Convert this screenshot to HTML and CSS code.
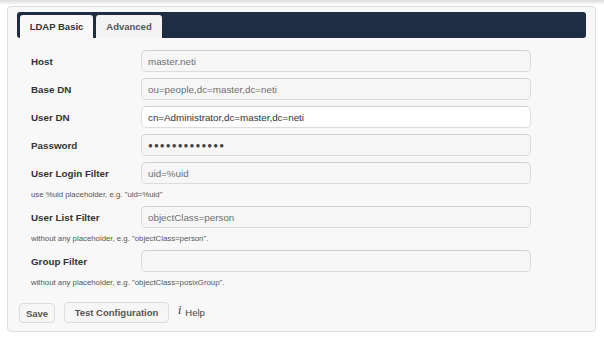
FILE: index.html
```html
<!DOCTYPE html>
<html lang="en">
<head>
  <meta charset="UTF-8">
  <title>LDAP</title>
  <link rel="stylesheet" href="styles.css">
</head>
<body>
  <div class="panel">
    <div class="tabbar">
      <div class="tab active">LDAP Basic</div>
      <div class="tab">Advanced</div>
    </div>

    <div class="form">
      <div class="row">
        <label>Host</label>
        <div class="input muted">master.neti</div>
      </div>
      <div class="row">
        <label>Base DN</label>
        <div class="input muted">ou=people,dc=master,dc=neti</div>
      </div>
      <div class="row">
        <label>User DN</label>
        <div class="input filled">cn=Administrator,dc=master,dc=neti</div>
      </div>
      <div class="row">
        <label>Password</label>
        <div class="input dots">&#9679;&#9679;&#9679;&#9679;&#9679;&#9679;&#9679;&#9679;&#9679;&#9679;&#9679;&#9679;&#9679;</div>
      </div>
      <div class="row">
        <label>User Login Filter</label>
        <div class="input muted">uid=%uid</div>
      </div>
      <div class="help">use %uid placeholder, e.g. "uid=%uid"</div>
      <div class="row">
        <label>User List Filter</label>
        <div class="input muted">objectClass=person</div>
      </div>
      <div class="help">without any placeholder, e.g. "objectClass=person".</div>
      <div class="row">
        <label>Group Filter</label>
        <div class="input muted"></div>
      </div>
      <div class="help">without any placeholder, e.g. "objectClass=posixGroup".</div>
    </div>

    <div class="actions">
      <button class="button save">Save</button>
      <button class="button test">Test Configuration</button>
      <span class="info">i</span>
      <span class="help-link">Help</span>
    </div>
  </div>
</body>
</html>
```

FILE: styles.css
```css
body {
  margin: 0;
  padding: 6px 0 0 7px;
  font-family: 'Liberation Sans', Arial, sans-serif;
  background: linear-gradient(#dcdcdc, #ffffff 5px);
  background-repeat: no-repeat;
  background-color: #fff;
  color: #333;
}

.panel {
  box-sizing: border-box;
  width: 589px;
  height: 326px;
  padding: 5px 9px 0 9px;
  display: flex;
  flex-direction: column;
  background-color: #f8f8f8;
  border: 1px solid #dedede;
  border-radius: 4px;
}

.tabbar {
  height: 26px;
  box-sizing: border-box;
  padding: 3px 3px 0 3px;
  display: flex;
  gap: 3px;
  background-color: #1e2c44;
  border-radius: 3px;
}

.tab {
  height: 23px;
  line-height: 24px;
  width: 66px;
  text-align: center;
  font-size: 9.5px;
  font-weight: bold;
  color: #555;
  background-color: #f3f3f3;
  border-radius: 3px 3px 0 0;
}

.tab.active {
  width: 73px;
  color: #333;
  background-color: #f8f8f8;
}

.form {
  margin-top: 12px;
  padding-left: 14px;
}

.row {
  display: flex;
  align-items: center;
  height: 22px;
  margin-bottom: 6px;
}

.row label {
  width: 110px;
  font-size: 9.8px;
  font-weight: bold;
  color: #333;
}

.input {
  box-sizing: border-box;
  width: 390px;
  height: 22px;
  line-height: 21px;
  padding: 0 6px;
  font-size: 9.8px;
  color: #333;
  background-color: #f6f6f6;
  border: 1px solid #dcdcdc;
  border-top-color: #cfcfcf;
  border-radius: 5px;
}

.input.muted {
  color: #6e6e6e;
}

.input.filled {
  background-color: #fff;
}

.input.dots {
  font-size: 8px;
  letter-spacing: 1.1px;
  color: #444;
}

.help {
  margin: 1px 0 6px;
  line-height: 10px;
  font-size: 7.8px;
  color: #555;
}

.actions {
  margin-top: 8px;
  padding-left: 2px;
  display: flex;
  align-items: center;
}

.button {
  height: 21px;
  font-family: 'Liberation Sans', Arial, sans-serif;
  font-size: 9.5px;
  font-weight: bold;
  color: #555;
  background-color: #f6f6f6;
  border: 1px solid #dcdcdc;
  border-radius: 4px;
  cursor: pointer;
}

.button.save {
  height: 20px;
  width: 36px;
  padding: 0;
  margin-top: 1px;
}

.button.test {
  width: 105px;
  padding: 0;
  margin-left: 9px;
}

.info {
  margin-left: 9px;
  margin-top: -4px;
  font-family: 'Liberation Serif', serif;
  font-style: italic;
  font-size: 12px;
  color: #333;
}

.help-link {
  margin-left: 4px;
  font-size: 9.5px;
  color: #444;
}
```
